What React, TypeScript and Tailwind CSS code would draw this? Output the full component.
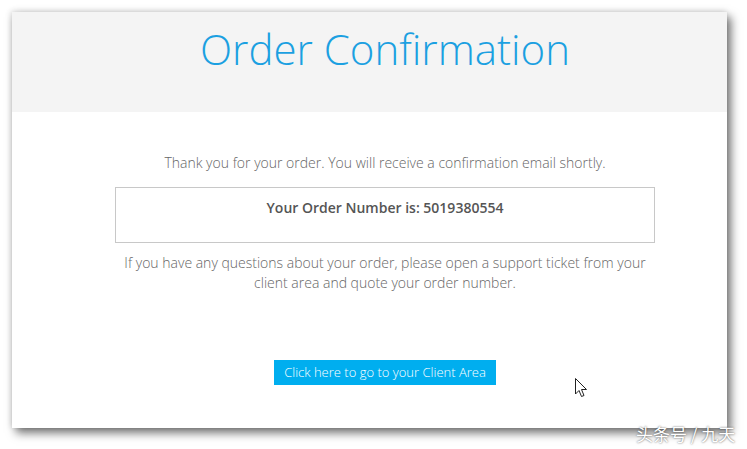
import React from 'react';

export default function App() {
  return (
    <div className="relative w-[747px] h-[449px] overflow-hidden bg-white pl-[12px] pt-[12px]" style={{ fontFamily: '"Open Sans", "Liberation Sans", sans-serif' }}>
      <div className="w-[715px] h-[416px] bg-white shadow-[4px_5px_9px_rgba(0,0,0,0.55),-1px_-1px_6px_rgba(0,0,0,0.15)]">
        {/* header */}
        <div className="h-[100px] bg-[#f4f4f4] pl-[103px] pr-[72px] pt-[12px]">
          <h1 className="text-center text-[42px] leading-[50px] font-light text-[#1ba0e1]">Order Confirmation</h1>
        </div>

        <div className="pl-[103px] pr-[72px] pt-[41px] text-center text-[14px] font-light text-[#666]">
          <p className="leading-[20px]">Thank you for your order. You will receive a confirmation email shortly.</p>
          <div className="mt-[14px] h-[56px] border border-[#c8c8c8] pt-[10px]">
            <p className="font-semibold text-[#555] leading-[20px]">Your Order Number is: 5019380554</p>
          </div>
          <p className="mt-[10px] leading-[20px] px-[6px]">If you have any questions about your order, please open a support ticket from your client area and quote your order number.</p>
          <div className="mt-[67px] flex justify-center">
            <a className="bg-[#00aeef] px-[10px] h-[25px] leading-[25px] text-[13px] font-light text-white">Click here to go to your Client Area</a>
          </div>
        </div>
      </div>

      {/* mouse cursor */}
      <svg className="absolute left-[575px] top-[378px]" width="13" height="21" viewBox="0 0 13 21">
        <path d="M0.5 0.5 L0.5 16 L4 12.5 L6.5 18.5 L9 17.5 L6.5 11.5 L11.5 11.5 Z" fill="#fff" stroke="#222" strokeWidth="1" strokeLinejoin="round" />
      </svg>

      {/* watermark */}
      <div className="absolute left-[636px] top-[421px] text-[17px] text-white [text-shadow:0_0_2px_rgba(0,0,0,0.7)]" style={{ fontFamily: '"Noto Sans CJK SC", sans-serif' }}>头条号 / 九天</div>
    </div>
  );
}
